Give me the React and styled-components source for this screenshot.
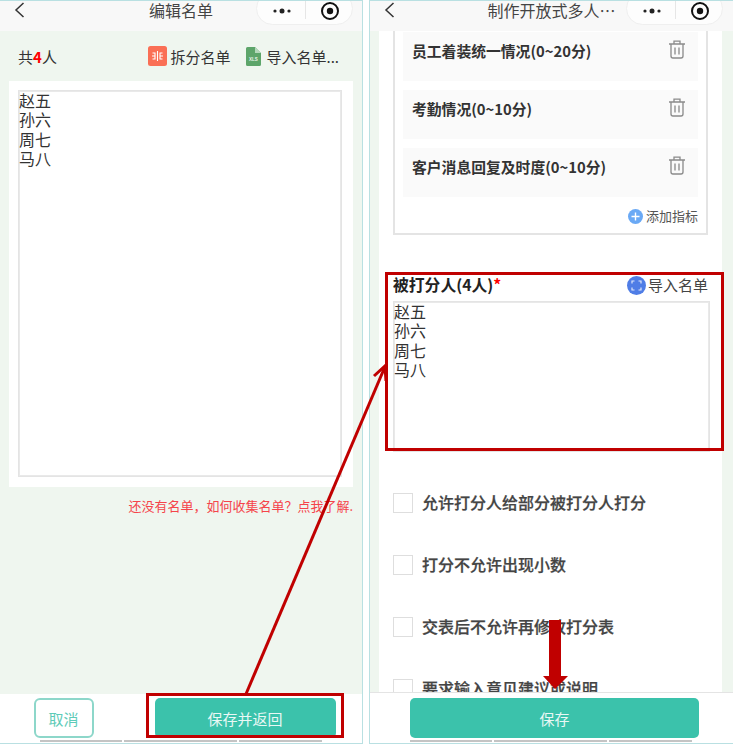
import React from "react";
import styled, { createGlobalStyle } from "styled-components";

const names = ["赵五", "孙六", "周七", "马八"];
const criteria = ["员工着装统一情况(0~20分)", "考勤情况(0~10分)", "客户消息回复及时度(0~10分)"];
const options = [
  "允许打分人给部分被打分人打分",
  "打分不允许出现小数",
  "交表后不允许再修改打分表",
  "要求输入意见建议或说明",
];

function BackIcon() {
  return (
    <svg width="11" height="16" viewBox="0 0 11 16" fill="none">
      <path d="M9.5 1 2 8l7.5 7" stroke="#333" strokeWidth="1.5" />
    </svg>
  );
}

function CapsuleBar({ right }) {
  return (
    <Capsule $right={right}>
      <svg width="20" height="6" viewBox="0 0 20 6">
        <circle cx="3" cy="3" r="1.6" fill="#222" />
        <circle cx="10" cy="3" r="2.5" fill="#222" />
        <circle cx="17" cy="3" r="1.6" fill="#222" />
      </svg>
      <CapsuleLine />
      <svg width="20" height="20" viewBox="0 0 20 20">
        <circle cx="10" cy="10" r="8" fill="none" stroke="#111" strokeWidth="2" />
        <circle cx="10" cy="10" r="3.2" fill="#111" />
      </svg>
    </Capsule>
  );
}

function SplitIcon() {
  return (
    <svg width="19" height="20" viewBox="0 0 19 20">
      <rect width="19" height="20" rx="2.5" fill="#fa6f55" />
      <path d="M9.5 5v10M4.5 7h2.5v6H4.5M4 10h3M14.5 7H12v6h2.5M12 10h3" fill="none" stroke="#fff" strokeWidth="1.1" />
    </svg>
  );
}

function XlsIcon() {
  return (
    <svg width="15" height="19" viewBox="0 0 15 19">
      <path d="M0 1.5A1.5 1.5 0 0 1 1.5 0H9l6 6v11.5a1.5 1.5 0 0 1-1.5 1.5h-12A1.5 1.5 0 0 1 0 17.5z" fill="#5da56a" />
      <path d="M9 0l6 6H9z" fill="#b5d8bb" />
      <text x="7.5" y="14" fontSize="4.5" fontWeight="700" fill="#e8f3ea" textAnchor="middle" fontFamily="Liberation Sans, sans-serif">XLS</text>
    </svg>
  );
}

function TrashIcon() {
  return (
    <svg width="18" height="19" viewBox="0 0 18 19" fill="none" stroke="#8a8a8a" strokeWidth="1.3">
      <path d="M1 4h16M6 4V1.2h6V4M3 4v12a2 2 0 0 0 2 2h8a2 2 0 0 0 2-2V4M7 7.5v7M11 7.5v7" />
    </svg>
  );
}

function PlusIcon() {
  return (
    <svg width="15" height="15" viewBox="0 0 15 15">
      <circle cx="7.5" cy="7.5" r="7.5" fill="#6aa9f5" />
      <path d="M3.5 7.5h8M7.5 3.5v8" stroke="#fff" strokeWidth="1.4" />
    </svg>
  );
}

function ImportIcon() {
  return (
    <svg width="19" height="19" viewBox="0 0 19 19">
      <circle cx="9.5" cy="9.5" r="9.5" fill="#4f7de6" />
      <path d="M5 7.5V5h2.5M14 7.5V5h-2.5M5 11.5V14h2.5M14 11.5V14h-2.5" fill="none" stroke="#dfe8fb" strokeWidth="1.2" />
    </svg>
  );
}

function Annotations() {
  return (
    <Overlay viewBox="0 0 733 745">
      <g fill="none" stroke="#c00000">
        <rect x="147.5" y="694.5" width="195" height="42" strokeWidth="3" />
        <rect x="386.5" y="273.5" width="336" height="176" strokeWidth="3" />
        <path d="M246 694 384 369" strokeWidth="3" />
        <path d="M374 376 385 366 386 381" strokeWidth="3" />
      </g>
      <path d="M549 620h12v56h7l-13 13-12-13h6z" fill="#c00000" />
    </Overlay>
  );
}

export default function App() {
  return (
    <Screen>
      <GlobalStyle />
      <Phone>
        <NavBar>
          <BackButton><BackIcon /></BackButton>
          <NavTitle>编辑名单</NavTitle>
          <CapsuleBar right={9} />
        </NavBar>
        <EditArea>
          <SummaryRow>
            <Count>共<strong>4</strong>人</Count>
            <ToolLink $gap={3}><SplitIcon />拆分名单</ToolLink>
            <ToolLink $gap={5} $left={16}><XlsIcon />导入名单...</ToolLink>
          </SummaryRow>
          <ListPanel>
            <NameBox $grow>
              {names.map((name) => <div key={name}>{name}</div>)}
            </NameBox>
          </ListPanel>
          <Hint>还没有名单，如何收集名单？点我了解.</Hint>
        </EditArea>
        <Footer>
          <CancelButton>取消</CancelButton>
          <SaveButton $width={181}>保存并返回</SaveButton>
        </Footer>
        <HomeBar />
      </Phone>

      <Phone $second>
        <NavBar>
          <BackButton><BackIcon /></BackButton>
          <NavTitle>制作开放式多人…</NavTitle>
          <CapsuleBar right={10} />
        </NavBar>
        <FormArea>
          <FormSheet>
            <CriteriaBox>
              {criteria.map((item) => (
                <CriteriaRow key={item}>
                  <span>{item}</span>
                  <TrashIcon />
                </CriteriaRow>
              ))}
              <AddRow><PlusIcon />添加指标</AddRow>
            </CriteriaBox>
            <FieldHead>
              <FieldLabel>被打分人(4人)<em>*</em></FieldLabel>
              <ImportLink><ImportIcon />导入名单</ImportLink>
            </FieldHead>
            <NameBox $height={151} $bleed={2}>
              {names.map((name) => <div key={name}>{name}</div>)}
            </NameBox>
            <OptionList>
              {options.map((item) => (
                <OptionRow key={item}>
                  <CheckBox />
                  <span>{item}</span>
                </OptionRow>
              ))}
            </OptionList>
          </FormSheet>
        </FormArea>
        <Footer $line>
          <SaveButton $width={289}>保存</SaveButton>
        </Footer>
        <HomeBar />
      </Phone>
      <Annotations />
    </Screen>
  );
}

const GlobalStyle = createGlobalStyle`
  html, body {
    margin: 0;
    background: #fff;
  }
  * {
    box-sizing: border-box;
  }
`;

const Screen = styled.div`
  position: relative;
  display: flex;
  gap: 6px;
  width: 733px;
  height: 745px;
  overflow: hidden;
  background: #fff;
  color: #333;
  font-family: "Noto Sans CJK SC", "Noto Sans", sans-serif;
`;

const Phone = styled.div`
  position: relative;
  display: flex;
  flex-direction: column;
  width: ${(p) => (p.$second ? "364px" : "363px")};
  height: 744px;
  border-top: 1px solid #b9e0e2;
  border-bottom: 1px solid #b9e0e2;
  border-right: ${(p) => (p.$second ? "none" : "1px solid #b9e0e2")};
  border-left: ${(p) => (p.$second ? "1px solid #b9e0e2" : "none")};
  overflow: hidden;
`;

const NavBar = styled.div`
  position: relative;
  flex: 0 0 30px;
  display: flex;
  justify-content: center;
  background: #f8f8f8;
`;

const BackButton = styled.div`
  position: absolute;
  left: 14px;
  top: 1px;
  line-height: 0;
`;

const NavTitle = styled.div`
  font-size: 16px;
  line-height: 18px;
  color: #444;
`;

const Capsule = styled.div`
  position: absolute;
  right: ${(p) => p.$right}px;
  top: -9px;
  width: 97px;
  height: 33px;
  padding: 9px 0 0 15px;
  display: flex;
  align-items: flex-start;
  border-radius: 17px;
  background: #fdfdfd;
  border: 1px solid #efefef;
  svg:first-child {
    margin-top: 6px;
  }
  svg:last-child {
    margin-left: 14px;
    margin-top: -1px;
  }
`;

const CapsuleLine = styled.div`
  width: 1px;
  height: 18px;
  margin: -1px 0 0 13px;
  background: #e6e6e6;
`;

const EditArea = styled.div`
  flex: 1;
  display: flex;
  flex-direction: column;
  background: #eff6ef;
`;

const SummaryRow = styled.div`
  flex: 0 0 50px;
  display: flex;
  align-items: center;
  padding: 0 23px 0 18px;
  font-size: 15px;
`;

const Count = styled.div`
  margin-right: auto;
  strong {
    color: #f00;
    font-weight: 700;
  }
`;

const ToolLink = styled.div`
  display: flex;
  align-items: center;
  gap: ${(p) => p.$gap}px;
  margin-left: ${(p) => p.$left || 0}px;
  font-size: 15px;
`;

const ListPanel = styled.div`
  height: 406px;
  margin: 0 9px;
  padding: 9px 11px 10px 9px;
  display: flex;
  background: #fff;
`;

const NameBox = styled.div`
  flex: ${(p) => (p.$grow ? 1 : "none")};
  height: ${(p) => (p.$height ? `${p.$height}px` : "auto")};
  margin-right: ${(p) => (p.$bleed ? `-${p.$bleed}px` : "0")};
  border: 1px solid #e4e4e4;
  box-shadow: inset 0 0 0 1px #e9e9e9;
  background: #fff;
  font-size: 16px;
  line-height: 19.4px;
  color: #333;
`;

const Hint = styled.div`
  margin: 10px 9px 0 0;
  text-align: right;
  font-size: 13px;
  line-height: 18px;
  color: #f5444a;
`;

const Footer = styled.div`
  flex: 0 0 ${(p) => (p.$line ? "51px" : "49px")};
  display: flex;
  justify-content: center;
  align-items: flex-start;
  gap: 61px;
  padding-top: ${(p) => (p.$line ? "5px" : "4px")};
  padding-left: ${(p) => (p.$line ? "6px" : "7px")};
  background: #fff;
  border-top: ${(p) => (p.$line ? "1px solid #e4e4e4" : "none")};
`;

const CancelButton = styled.div`
  width: 60px;
  height: 40px;
  display: flex;
  align-items: center;
  justify-content: center;
  border: 2px solid #8dd7ca;
  border-radius: 6px;
  background: #fff;
  color: #5ecbb8;
  font-size: 15px;
`;

const SaveButton = styled.div`
  width: ${(p) => p.$width}px;
  height: 40px;
  display: flex;
  align-items: center;
  justify-content: center;
  border-radius: 5px;
  background: #3bc2ab;
  color: #e9f8f5;
  font-size: 15px;
`;

const HomeBar = styled.div`
  position: absolute;
  left: 40px;
  bottom: 1px;
  width: 282px;
  height: 2px;
  background: linear-gradient(
    to right,
    #c4c4c4 0 82px,
    #fff 82px 84px,
    #c4c4c4 84px 197px,
    #fff 197px 199px,
    #c4c4c4 199px
  );
`;

const FormArea = styled.div`
  flex: 1;
  min-height: 0;
  padding: 0 11px 0 9px;
  background: #eff6ef;
  overflow: hidden;
`;

const FormSheet = styled.div`
  padding: 0 14px;
  background: #fff;
  font-size: 14px;
`;

const CriteriaBox = styled.div`
  height: 204px;
  padding: 1px 8px 0;
  display: flex;
  flex-direction: column;
  gap: 9px;
  border: 2px solid #e4e4e4;
  border-top: none;
`;

const CriteriaRow = styled.div`
  flex: 0 0 49px;
  display: flex;
  justify-content: space-between;
  align-items: flex-start;
  padding: 8px 12px 0 9px;
  background: #fafafa;
  font-size: 14.8px;
  line-height: 22px;
  font-weight: 700;
  color: #333;
`;

const AddRow = styled.div`
  display: flex;
  justify-content: flex-end;
  align-items: center;
  gap: 3px;
  margin-top: 1px;
  font-size: 13px;
  line-height: 18px;
  color: #555;
`;

const FieldHead = styled.div`
  display: flex;
  justify-content: space-between;
  align-items: center;
  margin: 40px 0 7px 0;
  height: 19px;
`;

const FieldLabel = styled.div`
  font-size: 15.8px;
  font-weight: 700;
  color: #222;
  em {
    color: #f00;
    font-style: normal;
  }
`;

const ImportLink = styled.div`
  display: flex;
  align-items: center;
  gap: 2px;
  font-size: 15px;
  color: #444;
  svg {
    margin-top: 1px;
  }
`;

const OptionList = styled.div`
  display: flex;
  flex-direction: column;
  gap: 42px;
  margin-top: 41px;
`;

const OptionRow = styled.div`
  display: flex;
  align-items: center;
  gap: 9px;
  height: 20px;
  font-size: 16px;
  font-weight: 500;
  -webkit-text-stroke: 0.25px #444;
  color: #444;
  span {
    margin-top: -2px;
  }
`;

const CheckBox = styled.div`
  flex: 0 0 20px;
  height: 20px;
  border: 1.5px solid #dedede;
  background: #fff;
`;

const Overlay = styled.svg`
  position: absolute;
  left: 0;
  top: 0;
  width: 733px;
  height: 745px;
  pointer-events: none;
`;
